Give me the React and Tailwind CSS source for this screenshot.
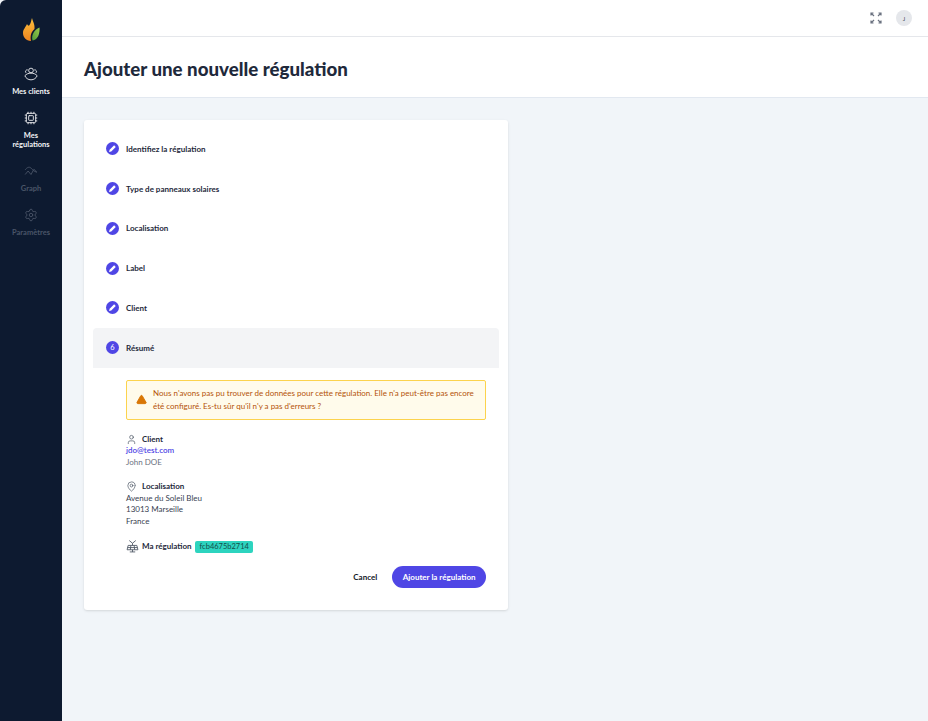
import React from 'react';
import { User, MapPin, TriangleAlert, Cpu, Settings } from 'lucide-react';

const font = "font-['Lato','Noto_Sans',sans-serif]";

const Logo = () => (
  <svg width="18" height="23" viewBox="0 0 18 23">
    <defs>
      <linearGradient id="flame" x1="0" y1="0" x2="0" y2="1">
        <stop offset="0" stopColor="#fbbf3c" />
        <stop offset="1" stopColor="#ee8420" />
      </linearGradient>
      <linearGradient id="leaf" x1="1" y1="0" x2="0" y2="1">
        <stop offset="0" stopColor="#9ccc4a" />
        <stop offset="1" stopColor="#4f9a3a" />
      </linearGradient>
    </defs>
    <path d="M10 0c1 4 3 6 2.500 11c-3.500 3 -4.500 7 -3.500 12c-5 0 -8 -4 -8 -8c0 -4 3 -6 4 -9c1 2 2 2 2.500 1c1.500 -2 1.500 -4 2.500 -7z" fill="url(#flame)" />
    <path d="M17.500 9.500c.5 5.500 -1.500 12.500 -7 13c-1.500 -5.500 1.500 -10.500 7 -13z" fill="url(#leaf)" />
  </svg>
);

const UsersIcon = () => (
  <svg width="14" height="14" viewBox="0 0 24 24" fill="none" stroke="currentColor" strokeWidth="1.500">
    <circle cx="12" cy="6" r="4" />
    <path d="M6.500 5a3 3 0 0 0 -3 5M17.500 5a3 3 0 0 1 3 5" />
    <path d="M1.500 15c2.500 -3 6 -4.500 10.500 -4.500s8 1.500 10.500 4.500c-1.500 4 -5.500 7 -10.500 7s-9 -3 -10.500 -7z" />
  </svg>
);

const GraphIcon = () => (
  <svg width="14" height="14" viewBox="0 0 24 24" fill="none" stroke="currentColor" strokeWidth="1.500">
    <path d="M2 10c3 -4 7 -6 10 -3s5 6 10 7" />
    <path d="M2 18l5 -6l5 6l5 -9l5 5" />
  </svg>
);

const SolarIcon = () => (
  <svg width="13" height="13" viewBox="0 0 24 24" fill="none" stroke="#4b5563" strokeWidth="1.600">
    <path d="M6 1l6 5l6 -5M12 6v4M4 10h16M3 14h18M2 18h20M4 10l-2 8M20 10l2 8M9 10l-1 8M15 10l1 8M12 18v4M7 22h10" />
  </svg>
);

const PencilMark = () => (
  <svg width="9" height="9" viewBox="0 0 10 10">
    <path d="M6.800 1.400l1.800 1.800l-5 5l-2.400 .6l.6 -2.400z" fill="white" />
  </svg>
);

const ExpandIcon = () => (
  <svg width="12" height="12" viewBox="0 0 12 12" fill="none" stroke="#6b7280" strokeWidth="1.200">
    <path d="M1 3.500v-2.500h2.500M1 1l3 3M11 3.500v-2.500h-2.500M11 1l-3 3M1 8.500v2.500h2.500M1 11l3 -3M11 8.500v2.500h-2.500M11 11l-3 -3" />
  </svg>
);

const NavItem = ({ icon, label, active }) => (
  <div className={`flex flex-col items-center ${active ? 'text-gray-100' : 'text-[#4a5568]'}`}>
    {icon}
    <div className="mt-[5.500px] text-center text-[7.500px] leading-[9px] font-bold">{label}</div>
  </div>
);

const Step = ({ label, number, active }) => (
  <div className={`flex h-[39.750px] items-center pl-[13px] ${active ? 'rounded-t-[4px] bg-[#f3f4f6]' : ''}`}>
    <div className="flex h-[13px] w-[13px] items-center justify-center rounded-full bg-[#4f46e5] text-[7.500px] text-white">
      {number || <PencilMark />}
    </div>
    <div className="ml-[7px] text-[8px] font-bold text-[#1e293b]">{label}</div>
  </div>
);

export default function App() {
  return (
    <div className={`flex h-[721px] w-[928px] overflow-hidden bg-[#f1f5f9] ${font}`}>
      {/* Sidebar */}
      <div className="flex w-[62px] shrink-0 flex-col items-center rounded-tl-[6px] bg-[#0d1a30]">
        <div className="mt-[18px] mb-[26px]"><Logo /></div>
        <div className="flex w-full flex-col gap-[15.500px] px-[8px]">
          <NavItem active icon={<UsersIcon />} label="Mes clients" />
          <NavItem active icon={<Cpu size={14} strokeWidth={1.500} />} label={<>Mes<br />régulations</>} />
          <NavItem icon={<GraphIcon />} label="Graph" />
          <NavItem icon={<Settings size={14} strokeWidth={1.500} />} label="Paramètres" />
        </div>
      </div>

      <div className="flex min-w-0 flex-1 flex-col">
        {/* Top bar */}
        <div className="flex h-[37px] shrink-0 items-center justify-end border-b border-[#e5e7eb] bg-white pr-[16px]">
          <ExpandIcon />
          <div className="ml-[14px] flex h-[16px] w-[16px] items-center justify-center rounded-full bg-[#e5e7eb] text-[6px] text-[#4b5563]">J</div>
        </div>

        {/* Title */}
        <div className="flex h-[61px] shrink-0 items-center border-b border-[#e2e8f0] bg-white pl-[22px] pt-[5px]">
          <h1 className="text-[18.700px] font-black text-[#1e293b]">Ajouter une nouvelle régulation</h1>
        </div>

        {/* Stepper card */}
        <div className="ml-[22px] mt-[22px] w-[424px] rounded-[3px] bg-white p-[9px] pb-[22px] shadow-sm">
          <Step label="Identifiez la régulation" />
          <Step label="Type de panneaux solaires" />
          <Step label="Localisation" />
          <Step label="Label" />
          <Step label="Client" />
          <Step label="Résumé" number="6" active />

          <div className="ml-[33px] mr-[13px] mt-[12px]">
            <div className="flex h-[40px] items-center rounded-[2px] border border-[#fcd34d] bg-[#fffbeb] pl-[9px] pr-[8px]">
              <TriangleAlert size={11} className="shrink-0 fill-[#d97706] text-[#d97706]" />
              <div className="ml-[6px] text-[8px] leading-[13px] text-[#b45309]">
                Nous n'avons pas pu trouver de données pour cette régulation. Elle n'a peut-être pas encore été configuré. Es-tu sûr qu'il n'y a pas d'erreurs ?
              </div>
            </div>

            <div className="mt-[14px] text-[8px] leading-[11.800px] text-[#374151]">
              <div className="flex items-center font-bold text-[#1e293b]">
                <User size={11} strokeWidth={1.500} className="mr-[5px] text-[#4b5563]" />
                Client
              </div>
              <div className="font-semibold text-[#4f46e5]">jdo@test.com</div>
              <div className="text-[#6b7280]">John DOE</div>

              <div className="mt-[12px] flex items-center font-bold text-[#1e293b]">
                <MapPin size={11} strokeWidth={1.500} className="mr-[5px] text-[#4b5563]" />
                Localisation
              </div>
              <div>Avenue du Soleil Bleu</div>
              <div>13013 Marseille</div>
              <div>France</div>

              <div className="mt-[12px] flex items-center font-bold text-[#1e293b]">
                <SolarIcon />
                <span className="ml-[3px]">Ma régulation</span>
                <span className="ml-[3.500px] rounded-[2px] bg-[#2dd4bf] px-[4.500px] text-[7.500px] font-normal leading-[12px] text-[#134e4a]">fcb4675b2714</span>
              </div>
            </div>

            <div className="mt-[13px] flex items-center justify-end">
              <div className="mr-[15px] text-[8px] font-bold text-[#111827]">Cancel</div>
              <div className="flex h-[22px] items-center rounded-full bg-[#4f46e5] px-[10.500px] text-[8px] font-bold text-white">Ajouter la régulation</div>
            </div>
          </div>
        </div>
      </div>
    </div>
  );
}
